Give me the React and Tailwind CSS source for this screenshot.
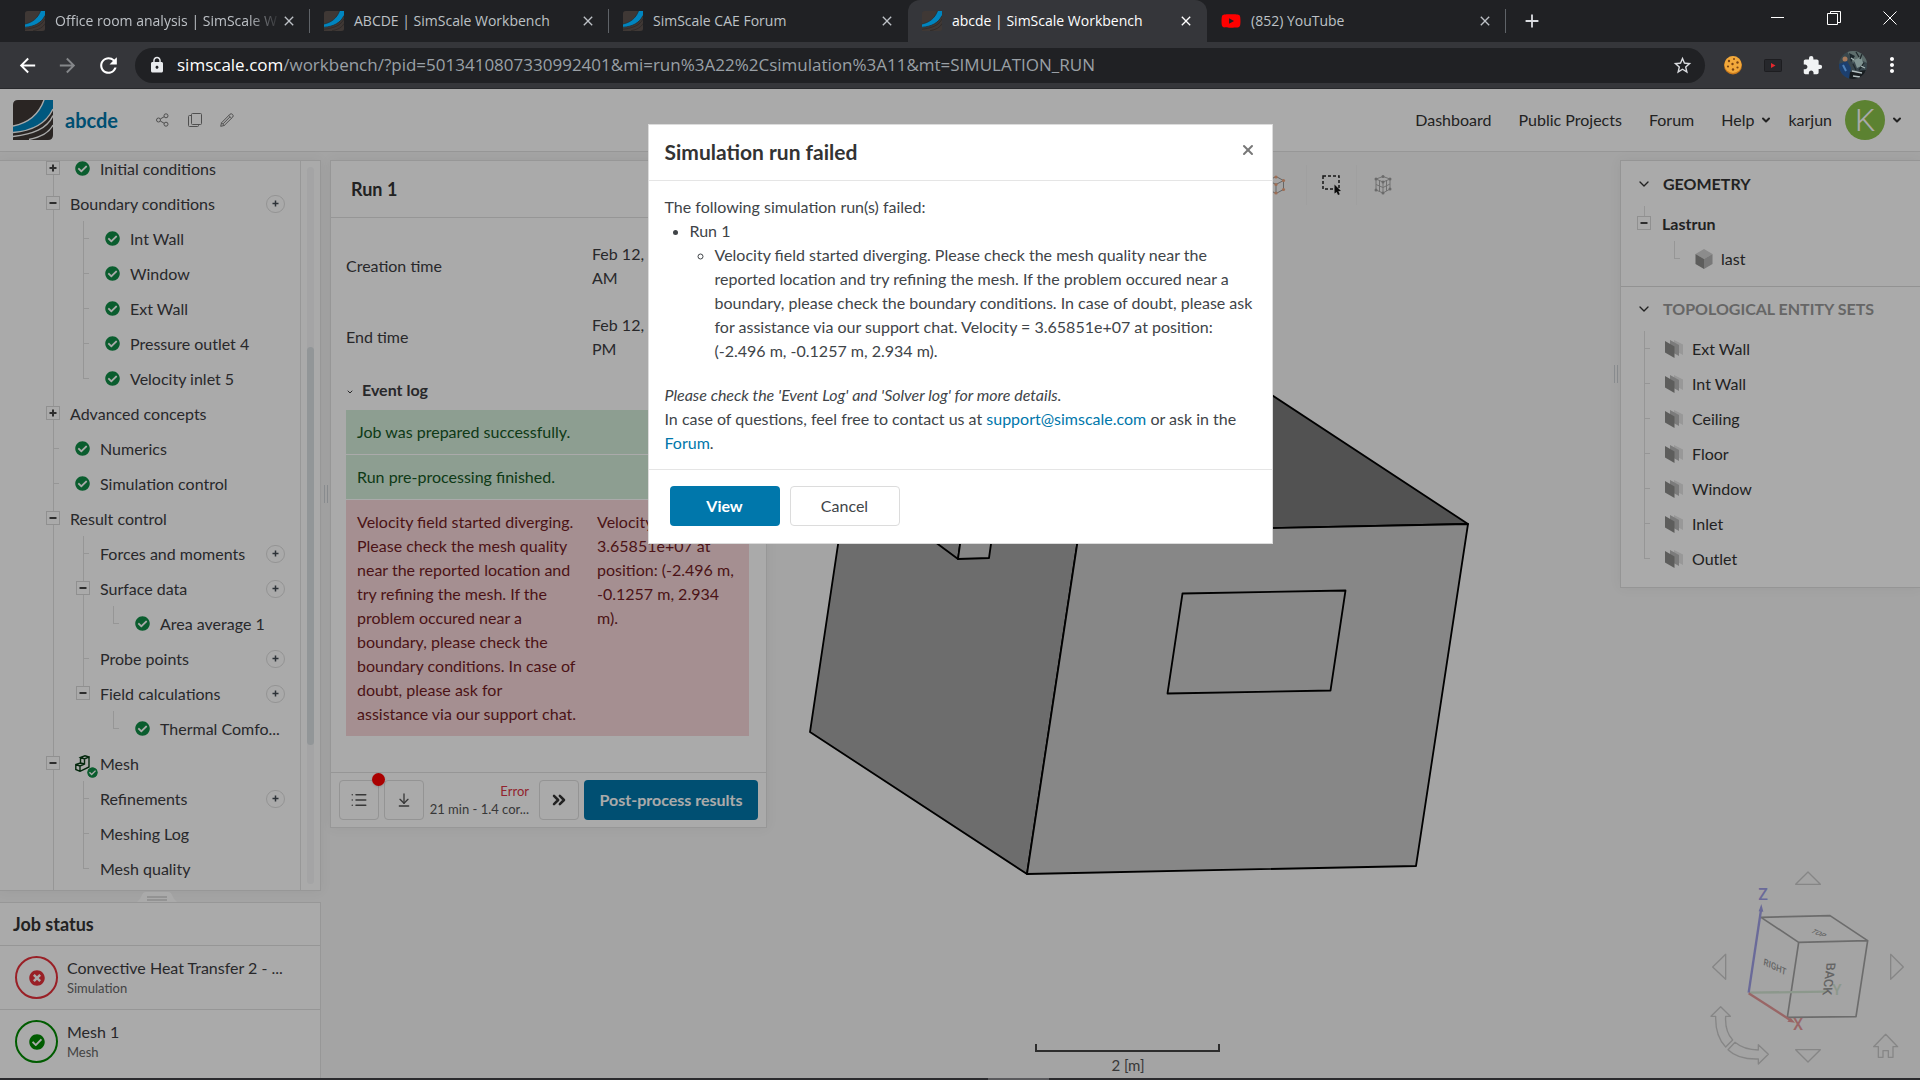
import { FaCheckCircle, FaTimesCircle, FaYoutube } from "react-icons/fa";
import {
  MdAdd,
  MdArrowBack,
  MdArrowForward,
  MdClose,
  MdExtension,
  MdLock,
  MdMoreVert,
  MdRefresh,
  MdStarBorder,
} from "react-icons/md";
import { ArrowDownToLine, ChevronDown, ChevronsRight, List, X } from "lucide-react";

const tabs = [
  { title: "Office room analysis | SimScale W", icon: "simscale", fade: true },
  { title: "ABCDE | SimScale Workbench", icon: "simscale" },
  { title: "SimScale CAE Forum", icon: "simscale", hideLine: true },
  { title: "abcde | SimScale Workbench", icon: "simscale", active: true },
  { title: "(852) YouTube", icon: "youtube" },
];

// guides: one entry per column, "line" runs through, "tick" branches, "end" is the last branch
const treeRows = [
  { label: "Initial conditions", guides: ["plus"], check: true },
  { label: "Boundary conditions", guides: ["minus"], add: true },
  { label: "Int Wall", guides: ["line", "tick"], check: true },
  { label: "Window", guides: ["line", "tick"], check: true },
  { label: "Ext Wall", guides: ["line", "tick"], check: true },
  { label: "Pressure outlet 4", guides: ["line", "tick"], check: true },
  { label: "Velocity inlet 5", guides: ["line", "end"], check: true },
  { label: "Advanced concepts", guides: ["plus"] },
  { label: "Numerics", guides: ["tick"], check: true },
  { label: "Simulation control", guides: ["tick"], check: true },
  { label: "Result control", guides: ["minus"] },
  { label: "Forces and moments", guides: ["line", "tick"], add: true },
  { label: "Surface data", guides: ["line", "minus"], add: true },
  { label: "Area average 1", guides: ["line", "line", "end"], check: true },
  { label: "Probe points", guides: ["line", "tick"], add: true },
  { label: "Field calculations", guides: ["line", "minusEnd"], add: true },
  { label: "Thermal Comfo...", guides: ["line", "none", "end"], check: true },
  { label: "Mesh", guides: ["minus"], mesh: true },
  { label: "Refinements", guides: ["line", "tick"], add: true },
  { label: "Meshing Log", guides: ["line", "tick"] },
  { label: "Mesh quality", guides: ["line", "end"] },
];

const entitySets = ["Ext Wall", "Int Wall", "Ceiling", "Floor", "Window", "Inlet", "Outlet"];

function SimScaleLogo({ className, stroke }) {
  return (
    <svg viewBox="0 0 40 40" className={className} aria-hidden="true">
      <path d="M5 0H40V35Q40 40 35 40H0V5Q0 0 5 0Z" fill="#3f3835" />
      <path d="M31 0H40V9C32 24 19 31 0 33V26C15 23 26 14 31 0Z" fill="#0085bf" />
      <g fill="none" stroke={stroke} strokeWidth="1.400">
        <path d="M31 0C26 14 15 23 0 26" />
        <path d="M40 9C33 24 19 31 0 32.500" />
        <path d="M40 15.500C34 29 20 34 0 36.500" />
        <path d="M40 25C36 33 28 37 16 39.500" />
      </g>
    </svg>
  );
}

function BrowserTab({ tab }) {
  return (
    <div
      className={`flex w-[299px] items-center pl-[14px] ${
        tab.active ? "rounded-t-xl bg-[#35363a] text-white" : "text-[#bdc1c6]"
      }`}
    >
      {tab.icon === "youtube" ? (
        <FaYoutube className="h-5 w-5 shrink-0 text-[#ff0000]" />
      ) : (
        <SimScaleLogo className="h-5 w-5 shrink-0" stroke="#2b2725" />
      )}
      <span
        className={`ml-[10px] flex-1 text-sm whitespace-nowrap ${
          tab.fade ? "mask-r-from-85%" : ""
        }`}
      >
        {tab.title}
      </span>
      <button aria-label="Close tab" className="mr-[12px]">
        <MdClose className="h-4 w-4" />
      </button>
      <span
        className={`h-6 w-px ${tab.active || tab.hideLine ? "bg-transparent" : "bg-[#5f6368]"}`}
      />
    </div>
  );
}

function BrowserChrome() {
  return (
    <div className="shrink-0 font-['Open_Sans',sans-serif]">
      <div className="flex h-[42px] bg-[#202124] pl-[11px]">
        {tabs.map((tab) => (
          <BrowserTab key={tab.title} tab={tab} />
        ))}
        <button aria-label="New tab" className="ml-[15px] text-[#dadce0]">
          <MdAdd className="h-[22px] w-[22px]" />
        </button>
        <div className="ml-auto flex items-start gap-[28px] pt-1 pr-[16px] text-white">
          <button aria-label="Minimize" className="flex h-7 w-7 items-center justify-center">
            <svg viewBox="0 0 14 14" className="h-[14px] w-[14px]" stroke="currentColor">
              <path d="M0 6.500H13" />
            </svg>
          </button>
          <button aria-label="Restore" className="flex h-7 w-7 items-center justify-center">
            <svg viewBox="0 0 14 14" className="h-[14px] w-[14px]" fill="none" stroke="currentColor">
              <path d="M.5 2.500H10.500V13.500H.5ZM3.500 2.500V.5H13.500V11.500H10.500" />
            </svg>
          </button>
          <button aria-label="Close" className="flex h-7 w-7 items-center justify-center">
            <svg viewBox="0 0 14 14" className="h-[14px] w-[14px]" stroke="currentColor">
              <path d="M.5 .5L13.500 13.500M13.500 .5L.5 13.500" />
            </svg>
          </button>
        </div>
      </div>

      <div className="flex h-[46px] items-center bg-[#35363a] pr-[16px] pl-[16px] text-white">
        <button aria-label="Back">
          <MdArrowBack className="h-[23px] w-[23px]" />
        </button>
        <button aria-label="Forward" className="ml-[17px] text-[#85878a]">
          <MdArrowForward className="h-[23px] w-[23px]" />
        </button>
        <button aria-label="Reload" className="ml-[17px]">
          <MdRefresh className="h-[25px] w-[25px]" />
        </button>
        <div className="ml-[14px] flex h-[35px] flex-1 items-center rounded-full bg-[#202124] pr-[12px] pl-[13px]">
          <MdLock className="h-[18px] w-[18px] text-[#e8eaed]" />
          <p className="ml-[11px] flex-1 text-[17px] leading-6 whitespace-nowrap text-[#9aa0a6]">
            <span className="text-white">simscale.com</span>
            /workbench/?pid=5013410807330992401&amp;mi=run%3A22%2Csimulation%3A11&amp;mt=SIMULATION_RUN
          </p>
          <button aria-label="Bookmark this tab" className="text-[#dadce0]">
            <MdStarBorder className="h-[21px] w-[21px]" />
          </button>
        </div>
        <button aria-label="Cookie extension" className="ml-[18px]">
          <svg viewBox="0 0 20 20" className="h-5 w-5">
            <circle cx="10" cy="10.500" r="9" fill="#c9791c" />
            <circle cx="10" cy="9.500" r="8.500" fill="#f2a93b" />
            <g fill="#7a4312">
              <circle cx="6" cy="6" r="1.200" />
              <circle cx="11" cy="4" r="1" />
              <circle cx="14.500" cy="7.500" r="1.200" />
              <circle cx="9.500" cy="9" r="1.200" />
              <circle cx="5" cy="11.500" r="1.100" />
              <circle cx="10" cy="14.500" r="1.200" />
              <circle cx="14.500" cy="12.500" r="1.100" />
            </g>
          </svg>
        </button>
        <button aria-label="Video extension" className="ml-[21px]">
          <svg viewBox="0 0 18 13" className="h-[13px] w-[18px]">
            <rect x=".5" y=".5" width="17" height="12" rx="1" fill="#26272b" stroke="#1d1d20" />
            <path d="M7 4L11.500 6.500L7 9Z" fill="#e5282e" />
          </svg>
        </button>
        <button aria-label="Extensions" className="ml-[20px] text-[#f1f3f4]">
          <MdExtension className="h-[21px] w-[21px]" />
        </button>
        <button aria-label="Profile" className="ml-[16px]">
          <svg viewBox="0 0 28 28" className="h-7 w-7 rounded-full">
            <rect width="28" height="28" fill="#39474d" />
            <path d="M8 0H28V12L20 8L14 12Z" fill="#5d6d6c" />
            <path d="M15 9L22 6L25 14L18 17Z" fill="#7f9391" />
            <path d="M10 2L16 5L12 11Z" fill="#1b262b" />
            <path d="M17 1L20 6M23 3L21 8M25 12L20 19M14 13L17 19" stroke="#20292c" strokeWidth="1.300" />
            <path d="M12 7L15 9M22 15L26 17" stroke="#a9b9b8" strokeWidth="1.200" />
            <path d="M0 13L8 10L12 17L10 28H0Z" fill="#1c3f6e" />
            <circle cx="6" cy="8" r="2.500" fill="#a77a5c" />
            <path d="M11 21L27 19L24 28H10Z" fill="#181d20" />
            <path d="M13 20L23 22M14 25L21 26" stroke="#b3bfc1" strokeWidth="1.500" />
            <path d="M4 14L7 20" stroke="#4d82bb" strokeWidth="2" />
          </svg>
        </button>
        <button aria-label="Chrome menu" className="ml-[13px]">
          <MdMoreVert className="h-[24px] w-[24px]" />
        </button>
      </div>
      <div className="h-px bg-[#28292c]" />
    </div>
  );
}

function Header() {
  return (
    <header className="flex h-[63px] shrink-0 items-center border-b border-[#e3e3e3] bg-white pr-[17px] pl-[13px]">
      <SimScaleLogo className="h-10 w-10" stroke="#ffffff" />
      <h1 className="ml-3 text-xl font-bold text-[#0077ab]">abcde</h1>
      <div className="ml-[38px] flex items-center gap-[18px] text-[#777]">
        <button aria-label="Share">
          <svg viewBox="0 0 14 14" className="h-[14px] w-[14px]" fill="none" stroke="currentColor">
            <circle cx="2.500" cy="7" r="2" />
            <circle cx="10" cy="2.800" r="2" />
            <circle cx="10" cy="11.200" r="2" />
            <path d="M4.300 6L8.200 3.700M4.300 8L8.200 10.300" />
          </svg>
        </button>
        <button aria-label="Duplicate">
          <svg viewBox="0 0 14 14" className="h-[14px] w-[14px]" fill="none" stroke="currentColor">
            <rect x="3.500" y=".5" width="10" height="11" rx="1" />
            <path d="M3.500 2.500H1.500Q.5 2.500 .5 3.500V12.500Q.5 13.500 1.500 13.500H9.500Q10.500 13.500 10.500 12.500V11.500" />
          </svg>
        </button>
        <button aria-label="Rename">
          <svg viewBox="0 0 14 14" className="h-[14px] w-[14px]" fill="none" stroke="currentColor">
            <path d="M.7 13.300L1.500 9.800L10 1.200Q11.200 .2 12.500 1.400Q13.800 2.800 12.800 4L4.200 12.500ZM8.800 2.500L11.500 5.200M1.500 9.800L4.200 12.500M3 10.900L9.800 4" />
          </svg>
        </button>
      </div>
      <nav className="ml-auto flex items-center text-base text-[#333]">
        <a href="#dashboard">Dashboard</a>
        <a href="#projects" className="ml-[27px]">Public Projects</a>
        <a href="#forum" className="ml-[27px]">Forum</a>
        <button className="ml-[27px] flex items-center gap-[6px]">
          Help <ChevronDown className="h-3 w-3" strokeWidth={4} />
        </button>
        <button className="ml-[16px] flex items-center">
          karjun
          <span className="ml-[13px] flex h-10 w-10 items-center justify-center rounded-full bg-[#8bc34a] font-['Roboto',sans-serif] text-[32px] font-light text-white">
            K
          </span>
          <ChevronDown className="ml-[6px] h-3 w-3" strokeWidth={4} />
        </button>
      </nav>
    </header>
  );
}

function GuideCell({ type }) {
  if (type === "none") return <span className="w-[30px] shrink-0" />;
  if (type === "line") {
    return <span className="ml-[15px] w-[15px] shrink-0 self-stretch border-l border-[#e1e1e1]" />;
  }
  if (type === "tick" || type === "end") {
    return (
      <span className="ml-[15px] flex w-[15px] shrink-0 flex-col self-stretch">
        <span className="h-[18px] w-[6px] border-b border-l border-[#e1e1e1]" />
        {type === "tick" && <span className="flex-1 border-l border-[#e1e1e1]" />}
      </span>
    );
  }
  return (
    <span className="flex w-[30px] shrink-0 flex-col self-stretch">
      <span className="ml-[15px] h-[10px] border-l border-[#e1e1e1]" />
      <button
        aria-label={type === "plus" ? "Expand" : "Collapse"}
        className="ml-[8px] flex h-[14px] w-[14px] items-center justify-center border border-[#d8d8d8] bg-white"
      >
        <svg viewBox="0 0 8 8" className="h-2 w-2" stroke="#444" strokeWidth="2">
          <path d={type === "plus" ? "M.5 4H7.500M4 .5V7.500" : "M.5 4H7.500"} />
        </svg>
      </button>
      {type !== "minusEnd" && <span className="ml-[15px] flex-1 border-l border-[#e1e1e1]" />}
    </span>
  );
}

function MeshIcon() {
  return (
    <span className="relative ml-[7px] h-[17px] w-[15px]">
      <svg viewBox="0 0 15 17" className="h-[17px] w-[15px]" fill="none" stroke="#063d14" strokeWidth="1.400">
        <path d="M5.500 2.500L10 .8L14 2L9.500 4ZM14 2V12L5 16.300L.8 14.500V9.500L5.500 8V2.500M9.500 4V9L5 11V16.300M.8 9.500L5 11M5.500 8L9.500 9" />
      </svg>
      <FaCheckCircle className="absolute top-[12px] left-[12px] h-[11px] w-[11px] rounded-full bg-white text-[#0f8c45]" />
    </span>
  );
}

function TreeRow({ row }) {
  return (
    <li className="flex h-[35px] items-center pr-[15px] pl-[38px]">
      {row.guides.map((type, i) => (
        <GuideCell key={i} type={type} />
      ))}
      {row.check && <FaCheckCircle className="ml-[7px] h-[15px] w-[15px] shrink-0 text-[#0f8c45]" />}
      {row.mesh && <MeshIcon />}
      <span className={`flex-1 whitespace-nowrap ${row.check || row.mesh ? "ml-[10px]" : "ml-[2px]"}`}>
        {row.label}
      </span>
      {row.add && (
        <button
          aria-label={`Add to ${row.label}`}
          className="flex h-[18px] w-[19px] items-center justify-center rounded-full border border-[#dedede]"
        >
          <svg viewBox="0 0 7 7" className="h-[7px] w-[7px]" stroke="#444c55" strokeWidth="1.500">
            <path d="M.5 3.500H6.500M3.500 .5V6.500" />
          </svg>
        </button>
      )}
    </li>
  );
}

function JobRow({ title, kind, failed }) {
  const Icon = failed ? FaTimesCircle : FaCheckCircle;
  return (
    <li className="flex h-16 items-center gap-[9px] border-t border-[#e1e1e1] pl-[15px]">
      <span
        className={`flex h-[43px] w-[43px] items-center justify-center rounded-full border-2 ${
          failed ? "border-[#e6303a] text-[#e6303a]" : "border-[#008a00] text-[#008a00]"
        }`}
      >
        <Icon className="h-4 w-4" />
      </span>
      <span className="flex flex-col">
        <span className="leading-5">{title}</span>
        <span className="text-[13px] leading-5 text-[#666]">{kind}</span>
      </span>
    </li>
  );
}

function LeftColumn() {
  return (
    <aside className="flex w-[321px] shrink-0 flex-col pt-[8px]">
      <section className="flex min-h-0 flex-1 overflow-hidden border-y border-r border-[#e3e3e3] bg-white shadow-[0_0_12px_#0000000d]">
        <ul className="-mt-[10px] h-[741px] flex-1 overflow-hidden border-r border-[#e5e5e5]">
          {treeRows.map((row) => (
            <TreeRow key={row.label} row={row} />
          ))}
          <li className="flex h-[6px] pl-[38px]">
            <GuideCell type="line" />
          </li>
        </ul>
        <div className="w-[19px] px-[6px] py-[6px]">
          <div className="h-full rounded-full bg-[#f6f7f8] pt-[180px]">
            <div className="h-[398px] rounded-full bg-[#dbe1e5]" />
          </div>
        </div>
      </section>
      <div className="flex justify-center pr-[8px]">
        <svg viewBox="0 0 40 10" className="mt-[1px] h-[10px] w-10">
          <path d="M0 10Q3 8 5 3Q6 0 9 0H31Q34 0 35 3Q37 8 40 10Z" fill="#fff" />
          <path d="M10 5H30M10 8H30" stroke="#bbb" />
        </svg>
      </div>
      <section className="h-[176px] shrink-0 border-t border-r border-[#e3e3e3] bg-white">
        <h2 className="pl-[13px] text-lg leading-[42px] font-bold text-[#333]">Job status</h2>
        <ul>
          <JobRow title="Convective Heat Transfer 2 - ..." kind="Simulation" failed />
          <JobRow title="Mesh 1" kind="Mesh" />
        </ul>
      </section>
    </aside>
  );
}

function SplitHandle() {
  return (
    <div className="flex w-[9px] shrink-0 items-center justify-center self-stretch">
      <span className="h-[18px] w-1 border-x border-[#cfd3d8]" />
    </div>
  );
}

function RunPanel() {
  return (
    <section className="w-[437px] border border-[#e3e3e3] bg-white shadow-[0_0_12px_#0000000d]">
      <h2 className="border-b border-[#e1e1e1] pl-[20px] text-lg leading-[56px] font-bold text-[#333]">
        Run 1
      </h2>
      <table className="mt-3 ml-[15px] w-[403px] table-fixed text-left">
        <tbody>
          <tr className="h-[71px]">
            <th scope="row" className="w-[246px] font-normal">Creation time</th>
            <td>
              Feb 12, 2021 9:45
              <br />
              AM
            </td>
          </tr>
          <tr className="h-[71px]">
            <th scope="row" className="font-normal">End time</th>
            <td>
              Feb 12, 2021 1:04
              <br />
              PM
            </td>
          </tr>
        </tbody>
      </table>
      <button className="ml-[15px] flex h-[36px] items-center gap-2 font-bold">
        <ChevronDown className="mt-1 h-2 w-2" strokeWidth={3} /> Event log
      </button>
      <table className="mt-[2px] ml-[15px] w-[403px] table-fixed text-left">
        <tbody className="align-top">
          <tr className="border-b border-white bg-[#d4edda] text-[#155724]">
            <td className="w-[240px] px-[11px] py-[10px]">Job was prepared successfully.</td>
            <td />
          </tr>
          <tr className="border-b border-white bg-[#d4edda] text-[#155724]">
            <td className="px-[11px] py-[10px]">Run pre-processing finished.</td>
            <td />
          </tr>
          <tr className="bg-[#f8d7da] text-[#721c24]">
            <td className="py-[10px] pl-[11px]">
              Velocity field started diverging. Please check the mesh quality near the reported
              location and try refining the mesh. If the problem occured near a boundary, please
              check the boundary conditions. In case of doubt, please ask for
              <br />
              assistance via our support chat.
            </td>
            <td className="px-[11px] py-[10px]">
              Velocity = 3.65851e+07 at position: (-2.496 m, -0.1257 m, 2.934 m).
            </td>
          </tr>
        </tbody>
      </table>
      <footer className="mt-[36px] flex h-[55px] items-center border-t border-[#e1e1e1] pr-[8px] pl-[8px]">
        <button
          aria-label="Event list"
          className="relative flex h-10 w-10 items-center justify-center rounded border border-[#dedede]"
        >
          <List className="h-[18px] w-[18px] text-[#555]" strokeWidth={2} />
          <span className="absolute -top-[8px] -right-[7px] h-[13px] w-[13px] rounded-full bg-[#ff0000] shadow-sm" />
        </button>
        <button
          aria-label="Download"
          className="ml-[5px] flex h-10 w-10 items-center justify-center rounded border border-[#dedede]"
        >
          <ArrowDownToLine className="h-4 w-4 text-[#555]" strokeWidth={2} />
        </button>
        <p className="ml-auto flex flex-col text-right text-[13px] leading-[18px] text-[#555]">
          <span className="text-[#dc3545]">Error</span>
          <span>21 min - 1.4 cor...</span>
        </p>
        <button
          aria-label="Expand run"
          className="ml-[10px] flex h-10 w-10 items-center justify-center rounded border border-[#dedede]"
        >
          <ChevronsRight className="h-5 w-5 text-[#333]" strokeWidth={3} />
        </button>
        <button className="ml-[5px] h-10 w-[174px] rounded bg-[#0077ab] text-base font-bold text-white">
          Post-process results
        </button>
      </footer>
    </section>
  );
}

// room geometry and scale bar, drawn in window coordinates
function Scene() {
  return (
    <svg viewBox="0 89 1920 989" className="absolute inset-0 h-full w-full" aria-label="3D model">
      <g stroke="#000" strokeWidth="1.800" strokeLinejoin="round">
        <path d="M1079 532L862 384L1255 384L1468 524Z" fill="#7b7b7b" />
        <path d="M810 732L862 384L1079 532L1027 874Z" fill="#a4a4a4" />
        <path d="M1079 532L1468 524L1416 866L1027 874Z" fill="#cbcbcb" />
        <path d="M1182.500 593.500L1345.500 590.500L1330.500 690.500L1167.500 693.500Z" fill="none" />
        <path d="M900 516L964 516L958 559Z" fill="#a4a4a4" />
        <path d="M964 516L995 516L989 558L958 559Z" fill="#cbcbcb" />
      </g>
      <path d="M1036 1044V1051H1219V1044" fill="none" stroke="#444" strokeWidth="2" />
      <text x="1128" y="1071" textAnchor="middle" fontSize="15" fill="#555">
        2 [m]
      </text>
    </svg>
  );
}

function ViewCube() {
  return (
    <svg viewBox="0 0 720 684" className="h-[228px] w-[240px]" fill="none" aria-label="View cube">
      <g stroke="#c9c9c9" strokeWidth="4" strokeLinejoin="round">
        <path d="M384 66L421 103H347Z" />
        <path d="M384 636L421 599H347Z" />
        <path d="M98 351L137 313V388Z" />
        <path d="M670 351L632 313V388Z" />
        <path d="M617 553L653 590H639V622H625V602H609V622H595V590H581Z" />
        <path d="M122 470L151 499H137C135 530 142 552 158 570L137 591C116 570 106 540 107 499H93Z" />
        <path d="M165 577C185 594 208 600 235 600V584L265 613L235 642V627C200 628 165 620 144 599Z" />
      </g>
      <g stroke="#a3a3a3" strokeWidth="5" strokeLinejoin="round">
        <path d="M243 202L450 197L563 272L356 277ZM356 277L322 502L528 500L563 272" />
      </g>
      <path d="M207 428L440 425" stroke="#d3e4d3" strokeWidth="7" />
      <path d="M206 428L243 180" stroke="#9f9fe6" strokeWidth="7" />
      <path d="M236 184L244 162L250 185Z" fill="#9f9fe6" />
      <path d="M206 430L334 512" stroke="#e69a9a" strokeWidth="7" />
      <path d="M322 515L345 518L332 503Z" fill="#e69a9a" />
      <g fontFamily="Roboto, sans-serif" fontWeight="500">
        <text x="235" y="149" fontSize="48" fill="#9f9fe6">Z</text>
        <text x="339" y="539" fontSize="48" fill="#e69a9a">X</text>
        <text x="457" y="436" fontSize="46" fill="#d3e4d3">Y</text>
        <g fill="#989898">
          <text fontSize="28" transform="matrix(.83 .4 -.13 1 250 344)">RIGHT</text>
          <text fontSize="38" transform="matrix(-.13 1 -1 .02 440 338)">BACK</text>
          <text fontSize="25" transform="matrix(.8 .35 -.8 .5 390 246)">TOP</text>
        </g>
      </g>
    </svg>
  );
}

function CubeIcon() {
  return (
    <svg viewBox="0 0 18 20" className="ml-[6px] h-5 w-[18px]">
      <path d="M9 0L17.500 5L9 10L.5 5Z" fill="#d2d2d2" />
      <path d="M.5 5L9 10V20L.5 15Z" fill="#8c8c8a" />
      <path d="M17.500 5L9 10V20L17.500 15Z" fill="#b4b4b4" />
    </svg>
  );
}

function FacesIcon() {
  return (
    <svg viewBox="0 0 18 18" className="ml-[6px] h-[18px] w-[18px]">
      <path d="M9 0L18 4.500V15L9 10Z" fill="#e4e4e4" />
      <path d="M5 0L14 5V16L5 11Z" fill="#b9b9b9" />
      <path d="M0 1L9.500 6.500V18L0 12.500Z" fill="#8c8c8a" />
    </svg>
  );
}

function GeometryPanel() {
  return (
    <section className="border border-r-0 border-[#e0e0e0] bg-white pl-[8px] text-[#333] shadow-[0_0_12px_#0000000d]">
      <h2>
        <button className="flex h-[45px] items-center gap-[11px] pl-[7px] font-bold">
          <ChevronDown className="h-4 w-4" strokeWidth={2} /> GEOMETRY
        </button>
      </h2>
      <ul className="pb-[10px]">
        <li className="flex h-[35px] items-center font-bold">
          <GuideCell type="minusEnd" />
          <span className="ml-[3px]">Lastrun</span>
        </li>
        <li className="flex h-[35px] items-center">
          <GuideCell type="none" />
          <GuideCell type="end" />
          <CubeIcon />
          <span className="ml-[8px]">last</span>
        </li>
      </ul>
      <h2 className="-ml-[8px] border-t border-[#dcdcdc] pl-[8px]">
        <button className="flex h-[44px] items-center gap-[11px] pl-[7px] font-bold text-[#9a9a9a]">
          <ChevronDown className="h-4 w-4 text-[#333]" strokeWidth={2} /> TOPOLOGICAL ENTITY SETS
        </button>
      </h2>
      <ul className="pb-[11px]">
        {entitySets.map((name, i) => (
          <li key={name} className="flex h-[35px] items-center">
            <GuideCell type={i === entitySets.length - 1 ? "end" : "tick"} />
            <FacesIcon />
            <span className="ml-[9px]">{name}</span>
          </li>
        ))}
      </ul>
    </section>
  );
}

function ViewerToolbar() {
  return (
    <div className="flex h-[64px] items-center pt-[2px]">
      <button aria-label="Edges" className="w-[58px] pl-[18px]">
        <svg viewBox="0 0 20 20" className="h-5 w-5" fill="none" stroke="#999">
          <path d="M10 1.500L17.500 5.500V14.500L10 18.500L2.500 14.500V5.500ZM2.500 5.500L10 9.500L17.500 5.500M10 9.500V18.500" />
          <g fill="#eda57f" stroke="none">
            <circle cx="10" cy="2" r="1.600" />
            <circle cx="17.500" cy="5.500" r="1.600" />
            <circle cx="17.500" cy="14.500" r="1.600" />
            <circle cx="10" cy="18" r="1.600" />
            <circle cx="2.500" cy="14.500" r="1.600" />
            <circle cx="2.500" cy="5.500" r="1.600" />
            <circle cx="10" cy="9.500" r="1.600" />
          </g>
        </svg>
      </button>
      <span className="h-10 w-px bg-[#f0f0f0]" />
      <button aria-label="Box selection" className="ml-[15px]">
        <svg viewBox="0 0 20 20" className="h-5 w-5">
          <path d="M1 1H17V14H1Z" fill="none" stroke="#222" strokeWidth="1.500" strokeDasharray="3 2" />
          <path d="M12.500 9.500L19 16L16.300 16.300L17.800 19.200L16 20L14.700 17L12.500 18.500Z" fill="#111" />
        </svg>
      </button>
      <span className="ml-[14px] h-10 w-px bg-[#f0f0f0]" />
      <button aria-label="Mesh view" className="ml-[17px]">
        <svg viewBox="0 0 18 20" className="h-5 w-[18px]" fill="none" stroke="#aaa">
          <path d="M2 4L9 7V18L2 15ZM9 7L16 4V14L9 18M2 4L9 1.500L16 4M5.500 5.500V16.500M2 9.500L9 12.500L16 9M12.500 5.500V16" />
          <g fill="#a0a0a0" stroke="none">
            <circle cx="2" cy="4" r="1.500" />
            <circle cx="9" cy="1.500" r="1.500" />
            <circle cx="16" cy="4" r="1.500" />
            <circle cx="9" cy="7" r="1.500" />
            <circle cx="2" cy="15" r="1.500" />
            <circle cx="9" cy="18" r="1.500" />
            <circle cx="16" cy="14" r="1.500" />
          </g>
        </svg>
      </button>
    </div>
  );
}

function FailedDialog() {
  return (
    <div
      role="dialog"
      aria-labelledby="dialog-title"
      className="w-[625px] border border-[#dcdcdc] bg-white text-base leading-6 text-[#404448]"
    >
      <div className="flex h-[56px] items-center justify-between border-b border-[#e5e5e5] pr-[16px] pb-[2px] pl-4">
        <h2 id="dialog-title" className="text-[21px] font-bold text-[#333]">Simulation run failed</h2>
        <button aria-label="Close dialog" className="mb-1 text-[#777]">
          <X className="h-4 w-4" strokeWidth={3} />
        </button>
      </div>
      <div className="border-b border-[#e5e5e5] px-4 pt-[14px] pb-[14px]">
        <p>The following simulation run(s) failed:</p>
        <ul className="list-disc pl-[25px]">
          <li>
            Run 1
            <ul className="list-[circle] pl-[25px]">
              <li>
                Velocity field started diverging. Please check the mesh quality near the reported
                location and try refining the mesh. If the problem occured near a boundary, please
                check the boundary conditions. In case of doubt, please ask for assistance via our
                support chat. Velocity = 3.65851e+07 at position: (-2.496 m, -0.1257 m, 2.934 m).
              </li>
            </ul>
          </li>
        </ul>
        <p className="mt-[20px]">
          <em>Please check the 'Event Log' and 'Solver log' for more details.</em>
          <br />
          In case of questions, feel free to contact us at{" "}
          <a href="mailto:support@simscale.com" className="text-[#0077ab]">support@simscale.com</a>{" "}
          or ask in the{" "}
          <a href="#forum" className="text-[#0077ab]">Forum</a>.
        </p>
      </div>
      <div className="flex gap-[10px] pt-4 pb-[17px] pl-[21px]">
        <button className="h-10 w-[110px] rounded bg-[#0077ab] font-bold text-white">View</button>
        <button className="h-10 w-[110px] rounded border border-[#dcdcdc]">Cancel</button>
      </div>
    </div>
  );
}

export default function App() {
  return (
    <div className="flex h-screen flex-col overflow-hidden">
      <BrowserChrome />
      <div className="relative flex min-h-0 flex-1 flex-col bg-[#f6f6f6] font-['Lato',sans-serif] text-base leading-6 text-[#3c3c3f]">
        <Scene />
        <div className="relative flex min-h-0 flex-1 flex-col">
          <Header />
          <main className="flex min-h-0 flex-1">
            <LeftColumn />
            <div className="mt-[8px] flex items-stretch self-start">
              <SplitHandle />
              <RunPanel />
            </div>
            <div className="flex flex-1 justify-end pr-[219px]">
              <ViewerToolbar />
            </div>
            <div className="flex w-[309px] shrink-0 flex-col items-end justify-between pt-[8px]">
              <div className="flex w-full">
                <SplitHandle />
                <div className="flex-1">
                  <GeometryPanel />
                </div>
              </div>
              <ViewCube />
            </div>
          </main>
        </div>
        <div className="absolute inset-0 flex items-start justify-center bg-[#00000055] pt-[35px]">
          <FailedDialog />
        </div>
      </div>
      <div className="flex h-[2px] shrink-0 justify-center bg-[#2b2b2e]">
        <span className="ml-[117px] w-[61px] bg-[#5a5a5d]" />
      </div>
    </div>
  );
}
